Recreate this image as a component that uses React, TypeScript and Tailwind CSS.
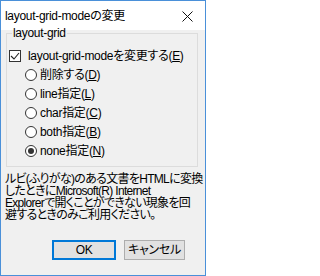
const Radio = ({ checked, label, mnemonic }: { checked?: boolean; label: string; mnemonic: string }) => (
  <div className="flex h-[19px] items-center pl-[18px]">
    <span className="flex h-[12px] w-[12px] shrink-0 items-center justify-center rounded-full border border-[#333333] bg-white">
      {checked && <span className="h-[6px] w-[6px] rounded-full bg-[#333333]" />}
    </span>
    <span className="ml-[3px] whitespace-nowrap">
      {label}(<span className="underline underline-offset-1">{mnemonic}</span>)
    </span>
  </div>
);

export default function App() {
  return (
    <div
      className="flex h-[276px] w-[206px] flex-col overflow-hidden border border-[#4a90d9] bg-[#f0f0f0] text-[12px] leading-[14px] tracking-[-0.3px] text-black [font-feature-settings:'palt']"
      style={{ fontFamily: '"Liberation Sans", "Noto Sans CJK JP", sans-serif' }}
    >
      {/* title bar */}
      <div className="flex h-[29px] shrink-0 items-center justify-between bg-white pl-[4px] pr-[12px]">
        <span className="whitespace-nowrap">layout-grid-modeの変更</span>
        <svg width="11" height="11" viewBox="0 0 11 11" className="mt-[1px]">
          <path d="M0.5 0.5 L10.5 10.5 M10.5 0.5 L0.5 10.5" stroke="#111" strokeWidth="1" />
        </svg>
      </div>

      <fieldset className="ml-[5px] mr-[7px] mt-[-4px] border border-[#dcdcdc] pb-[6px]">
        <legend className="ml-[5px] px-[1px] leading-[14px]">layout-grid</legend>
        <div className="mt-[6px] flex h-[19px] items-center pl-[2px]">
          <span className="flex h-[12px] w-[12px] shrink-0 items-center justify-center border border-[#333333] bg-white">
            <svg width="10" height="10" viewBox="0 0 10 10">
              <path d="M1 5 L4 8 L9 2" fill="none" stroke="#222" strokeWidth="1.1" />
            </svg>
          </span>
          <span className="ml-[7px] whitespace-nowrap">
            layout-grid-modeを変更する(<span className="underline underline-offset-1">E</span>)
          </span>
        </div>
        <Radio label="削除する" mnemonic="D" />
        <Radio label="line指定" mnemonic="L" />
        <Radio label="char指定" mnemonic="C" />
        <Radio label="both指定" mnemonic="B" />
        <Radio checked label="none指定" mnemonic="N" />
      </fieldset>

      <p className="mt-[6px] whitespace-nowrap pl-[4px] leading-[12px] tracking-[-0.7px]">
        ルビ(ふりがな)のある文書をHTMLに変換
        <br />
        したときにMicrosoft(R) Internet
        <br />
        Explorerで開くことができない現象を回
        <br />
        避するときのみご利用ください。
      </p>

      <div className="mt-auto mb-[15px] flex gap-[8px] pl-[51px]">
        <button className="h-[20px] w-[64px] border-2 border-[#0078d7] bg-[#e1e1e1] leading-none">
          OK
        </button>
        <button className="h-[20px] w-[61px] border border-[#adadad] bg-[#e1e1e1] leading-none">
          キャンセル
        </button>
      </div>
    </div>
  );
}
